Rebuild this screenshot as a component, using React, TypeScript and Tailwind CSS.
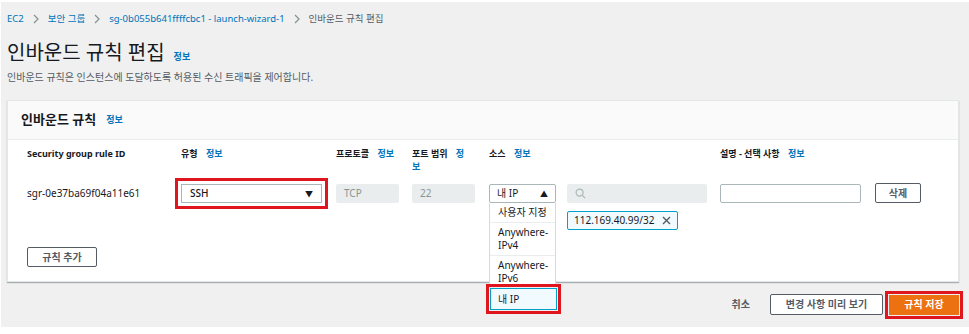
import React from 'react';

const font = { fontFamily: '"Noto Sans", "Noto Sans CJK KR", sans-serif' };

const Info: React.FC<{ className?: string }> = ({ className = '' }) => (
  <span className={`text-[9px] font-bold text-[#0073bb] ${className}`}>정보</span>
);

const Chevron = () => (
  <svg width="8" height="10" viewBox="0 0 8 10" className="mx-[8px]">
    <path d="M2 1l4 4-4 4" fill="none" stroke="#879596" strokeWidth="1.3" />
  </svg>
);

const SearchIcon = () => (
  <svg width="11" height="11" viewBox="0 0 12 12">
    <circle cx="5" cy="5" r="3.8" fill="none" stroke="#aab7b8" strokeWidth="1.3" />
    <path d="M8 8l3 3" stroke="#aab7b8" strokeWidth="1.4" />
  </svg>
);

const SourceDropdown = () => (
  <div className="absolute left-0 top-full w-[67px] z-10">
    <div className="bg-white border-x border-[#d5dbdb] text-[10px] text-[#16191f]">
      <div className="px-[8px] h-[20px] flex items-center border-b border-[#eaeded]">사용자 지정</div>
      <div className="px-[8px] py-[3px] leading-[13px] border-b border-[#eaeded]">
        Anywhere-
        <br />
        IPv4
      </div>
      <div className="px-[8px] pt-[3px] pb-[1px] leading-[13px]">
        Anywhere-
        <br />
        IPv6
      </div>
    </div>
    <div className="mt-[2px] ml-px w-[67px] h-[22px] bg-[#f1faff] border border-[#00a1c9] flex items-center px-[7px] text-[10px] text-[#16191f] outline outline-[3px] outline-[#e0161e] outline-offset-[1px]">
      내 IP
    </div>
  </div>
);

export default function App() {
  return (
    <div className="w-[969px] h-[334px] bg-white pt-[2px] pl-px" style={font}>
      <div className="h-[325px] bg-[#eff0ef] px-[6px] pt-[9px] text-[#16191f]">
        <div className="flex items-center h-[16px] text-[9.5px]">
          <span className="text-[#0073bb]">EC2</span>
          <Chevron />
          <span className="text-[#0073bb]">보안 그룹</span>
          <Chevron />
          <span className="text-[#0073bb]">sg-0b055b641ffffcbc1 - launch-wizard-1</span>
          <Chevron />
          <span className="text-[#545b64]">인바운드 규칙 편집</span>
        </div>
        <div className="flex items-baseline mt-[14px] h-[24px]">
          <h1 className="text-[20px] leading-[24px] font-normal">인바운드 규칙 편집</h1>
          <Info className="ml-[9px]" />
        </div>
        <p className="text-[10px] text-[#545b64] mt-[5px] h-[14px] leading-[14px]">
          인바운드 규칙은 인스턴스에 도달하도록 허용된 수신 트래픽을 제어합니다.
        </p>

        <div className="mt-[16px] w-[952px] bg-white border border-[#e4e7e7] shadow-[0_1px_1px_rgba(0,28,36,0.3)]">
          <div className="h-[39px] bg-[#fafafa] border-b border-[#eaeded] flex items-center px-[13px]">
            <span className="text-[13px] font-bold">인바운드 규칙</span>
            <Info className="ml-[10px]" />
          </div>

          <div className="pl-[19px] pt-[7px] pb-[14px]">
            <div className="grid grid-cols-[154px_155px_76px_77px_78px_153px_155px_60px] text-[9px] font-bold leading-[13px]">
              <div>Security group rule ID</div>
              <div>
                유형 <Info className="ml-[6px]" />
              </div>
              <div>
                프로토콜 <Info className="ml-[6px]" />
              </div>
              <div>
                포트 범위 <span className="ml-[6px] text-[#0073bb]">정</span>
                <br />
                <span className="text-[#0073bb]">보</span>
              </div>
              <div className="col-span-2">
                소스 <Info className="ml-[6px]" />
              </div>
              <div className="col-span-2">
                설명 - 선택 사항 <Info className="ml-[6px]" />
              </div>
            </div>

            <div className="grid grid-cols-[154px_155px_76px_77px_78px_153px_155px_60px] mt-[11px] text-[10px]">
              <div className="h-[19px] flex items-center">sgr-0e37ba69f04a11e61</div>
              <div>
                <div className="w-[141px] h-[19px] border border-[#aab7b8] flex items-center justify-between pl-[8px] pr-[8px] outline outline-[3px] outline-[#e0161e] outline-offset-[3px]">
                  <span className="font-medium">SSH</span>
                  <span className="text-[8px]">▼</span>
                </div>
              </div>
              <div>
                <div className="w-[63px] h-[19px] bg-[#eaeded] rounded-[2px] flex items-center px-[8px] text-[#879596]">TCP</div>
              </div>
              <div>
                <div className="w-[63px] h-[19px] bg-[#eaeded] rounded-[2px] flex items-center px-[8px] text-[#879596]">22</div>
              </div>
              <div>
                <div className="relative w-[67px]">
                  <div className="h-[19px] border border-[#aab7b8] rounded-[2px] flex items-center justify-between px-[7px]">
                    <span>내 IP</span>
                    <span className="text-[8px]">▲</span>
                  </div>
                  <SourceDropdown />
                </div>
              </div>
              <div>
                <div className="w-[140px] h-[19px] bg-[#eaeded] rounded-[2px] flex items-center px-[8px]">
                  <SearchIcon />
                </div>
                <div className="mt-[8px] inline-flex items-center h-[19px] bg-[#f1faff] border border-[#00a1c9] rounded-[2px] px-[6px] gap-[8px]">
                  <span>112.169.40.99/32</span>
                  <svg width="9" height="9" viewBox="0 0 9 9">
                    <path d="M1 1l7 7M8 1l-7 7" stroke="#545b64" strokeWidth="1.4" />
                  </svg>
                </div>
              </div>
              <div>
                <div className="w-[141px] h-[19px] border border-[#aab7b8] rounded-[2px] bg-white" />
              </div>
              <div>
                <button className="w-[46px] h-[20px] -mt-px border border-[#545b64] rounded-[2px] bg-white text-[10px] font-bold text-[#545b64]">
                  삭제
                </button>
              </div>
            </div>

            <button className="mt-[17px] w-[70px] h-[20px] border border-[#545b64] rounded-[2px] bg-white text-[10px] font-bold text-[#545b64]">
              규칙 추가
            </button>
          </div>
        </div>

        <div className="flex items-center justify-end mt-[12px] pr-[4px] text-[10px] font-bold">
          <span className="text-[#545b64] mr-[20px]">취소</span>
          <button className="w-[113px] h-[21px] border border-[#545b64] rounded-[2px] bg-white text-[#545b64] mr-[6px]">
            변경 사항 미리 보기
          </button>
          <button className="w-[70px] h-[20px] bg-[#ec7211] text-white outline outline-[3px] outline-[#e0161e] outline-offset-[1px]">
            규칙 저장
          </button>
        </div>
      </div>
    </div>
  );
}
